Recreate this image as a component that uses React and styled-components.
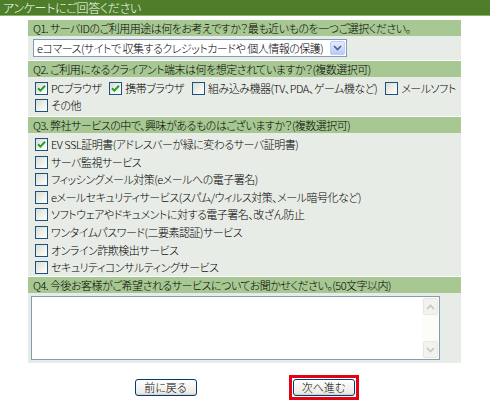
import React, { useState } from 'react';
import styled, { createGlobalStyle } from 'styled-components';

const GlobalStyle = createGlobalStyle`
  body {
    margin: 0;
    background: #fff;
    font-family: "Noto Sans CJK JP", "Liberation Sans", sans-serif;
    font-size: 11px;
    font-weight: 300;
    color: #000;
  }
`;

const q2Options = ['PCブラウザ', '携帯ブラウザ', '組み込み機器(TV、PDA、ゲーム機など)', 'メールソフト', 'その他'];

const q3Options = [
  'EV SSL証明書(アドレスバーが緑に変わるサーバ証明書)',
  'サーバ監視サービス',
  'フィッシングメール対策(eメールへの電子署名)',
  'eメールセキュリティサービス(スパム/ウィルス対策、メール暗号化など)',
  'ソフトウェアやドキュメントに対する電子署名、改ざん防止',
  'ワンタイムパスワード(二要素認証)サービス',
  'オンライン詐欺検出サービス',
  'セキュリティコンサルティングサービス',
];

const Check = ({ checked, label, onToggle }) => (
  <CheckLabel onClick={onToggle}>
    <Box>
      {checked && (
        <svg width="9" height="9" viewBox="0 0 9 9">
          <path d="M1 4.2 L3.4 6.6 L8 1.8" fill="none" stroke="#21a121" strokeWidth="2" />
        </svg>
      )}
    </Box>
    {label}
  </CheckLabel>
);

const App = () => {
  const [q2, setQ2] = useState([true, true, false, false, false]);
  const [q3, setQ3] = useState([true, false, false, false, false, false, false, false]);

  const flip = (list, setList, i) => setList(list.map((v, j) => (j === i ? !v : v)));

  return (
    <>
      <GlobalStyle />
      <TitleBar>アンケートにご回答ください</TitleBar>
      <Form>
        <QHead>Q1. サーバIDのご利用用途は何をお考えですか？最も近いものを一つご選択ください。</QHead>
        <QBody $pad="3px 0 3px 5px">
          <Select>
            <SelectText>eコマース(サイトで 収集するクレジットカードや 個人情報の保護)</SelectText>
            <DropButton>
              <svg width="9" height="6" viewBox="0 0 9 6">
                <path d="M1 1 L4.5 4.5 L8 1" fill="none" stroke="#4d6185" strokeWidth="1.6" />
              </svg>
            </DropButton>
          </Select>
        </QBody>

        <QHead>Q2. ご利用になるクライアント端末は何を想定されていますか？(複数選択可)</QHead>
        <QBody $pad="5px 0 4px 7px">
          <CheckWrap>
            {q2Options.map((o, i) => (
              <Check key={o} label={o} checked={q2[i]} onToggle={() => flip(q2, setQ2, i)} />
            ))}
          </CheckWrap>
        </QBody>

        <QHead>Q3. 弊社サービスの中で、興味があるものはございますか？(複数選択可)</QHead>
        <QBody $pad="5px 0 2px 7px">
          <CheckList>
            {q3Options.map((o, i) => (
              <Check key={o} label={o} checked={q3[i]} onToggle={() => flip(q3, setQ3, i)} />
            ))}
          </CheckList>
        </QBody>

        <QHead>Q4. 今後お客様がご希望されるサービスについてお聞かせください。(50文字以内)</QHead>
        <QBody $pad="3px 0 3px 3px">
          <TextBox>
            <Area />
            <ScrollBar>
              <ScrollBtn>
                <svg width="9" height="6" viewBox="0 0 9 6">
                  <path d="M1 5 L4.5 1.5 L8 5" fill="none" stroke="#c9c7ba" strokeWidth="1.6" />
                </svg>
              </ScrollBtn>
              <ScrollBtn>
                <svg width="9" height="6" viewBox="0 0 9 6">
                  <path d="M1 1 L4.5 4.5 L8 1" fill="none" stroke="#c9c7ba" strokeWidth="1.6" />
                </svg>
              </ScrollBtn>
            </ScrollBar>
          </TextBox>
        </QBody>

        <Buttons>
          <Cell>
            <Button>前に戻る</Button>
          </Cell>
          <Cell>
            <Focus>
              <Button>次へ進む</Button>
            </Focus>
          </Cell>
        </Buttons>
      </Form>
    </>
  );
};

export default App;

const TitleBar = styled.div`
  height: 15px;
  line-height: 15px;
  background: #4e7e2a;
  border-bottom: 1px solid #8eb36f;
  color: #fff;
  padding-left: 3px;
  font-size: 12px;
  letter-spacing: -0.3px;
  font-feature-settings: "palt";
`;

const Form = styled.div`
  width: 433px;
  margin: 4px 0 0 28px;
  font-feature-settings: "palt";
  letter-spacing: -0.5px;
`;

const QHead = styled.div`
  background: #a7c893;
  height: 16px;
  line-height: 16px;
  padding-left: 5px;
  white-space: nowrap;
`;

const QBody = styled.div`
  background: #e8ece6;
  padding: ${(p) => p.$pad};
  margin-bottom: 1px;
`;

const Select = styled.div`
  display: flex;
  align-items: center;
  width: 312px;
  height: 16px;
  border: 1px solid #7f9db9;
  background: #fff;
`;

const SelectText = styled.span`
  flex: 1;
  padding-left: 3px;
  white-space: nowrap;
  overflow: hidden;
`;

const DropButton = styled.span`
  width: 15px;
  height: 14px;
  margin-right: 1px;
  border: 1px solid #bccdf9;
  border-radius: 2px;
  background: linear-gradient(#e3ebfe, #b9cbf7);
  display: flex;
  align-items: center;
  justify-content: center;
  box-sizing: border-box;
`;

const CheckWrap = styled.div`
  display: flex;
  flex-wrap: wrap;
  column-gap: 8px;
  row-gap: 4px;
  width: 426px;
`;

const CheckList = styled.div`
  display: flex;
  flex-direction: column;
  gap: 4.6px;
`;

const CheckLabel = styled.label`
  display: flex;
  align-items: center;
  gap: 3px;
  height: 13px;
  line-height: 13px;
  white-space: nowrap;
  cursor: pointer;
`;

const Box = styled.span`
  width: 11px;
  height: 11px;
  border: 1px solid #1c5180;
  background: linear-gradient(135deg, #dcdcd4, #fff);
  display: flex;
  align-items: center;
  justify-content: center;
  flex-shrink: 0;
`;

const TextBox = styled.div`
  display: flex;
  width: 407px;
  height: 62px;
  border: 1px solid #7f9db9;
  background: #fff;
`;

const Area = styled.textarea`
  flex: 1;
  border: none;
  outline: none;
  resize: none;
  padding: 2px;
  font: inherit;
  background: transparent;
`;

const ScrollBar = styled.div`
  width: 17px;
  background: #fcfcf9;
  display: flex;
  flex-direction: column;
  justify-content: space-between;
  padding: 1px 0;
`;

const ScrollBtn = styled.span`
  height: 15px;
  margin: 0 1px;
  border: 1px solid #e8e8e1;
  border-radius: 2px;
  background: #f3f3ee;
  display: flex;
  align-items: center;
  justify-content: center;
`;

const Buttons = styled.div`
  display: grid;
  grid-template-columns: 158px 158px;
  justify-content: center;
  align-items: center;
  margin-top: 12px;
`;

const Cell = styled.div`
  display: flex;
  justify-content: center;
`;

const Focus = styled.div`
  border: 3px solid #e60012;
  padding: 1px;
  background: #fff;
`;

const Button = styled.button`
  width: 62px;
  height: 17px;
  padding: 0;
  border: 1px solid #003c74;
  border-radius: 3px;
  background: linear-gradient(#fff, #ecebe6 85%, #d6d0c5);
  font: inherit;
  font-size: 11px;
  line-height: 15px;
  color: #000;
  cursor: pointer;
`;
